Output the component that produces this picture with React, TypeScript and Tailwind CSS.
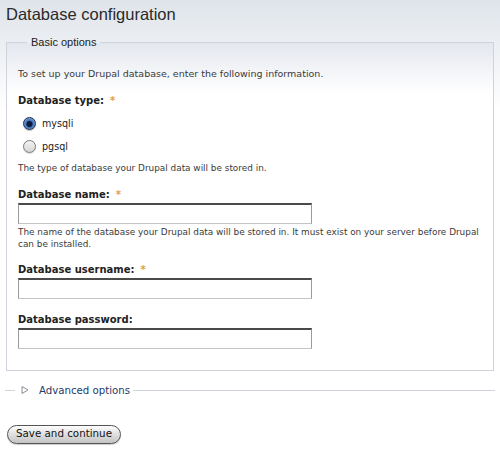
import { FC } from 'react';

const body = { fontFamily: '"DejaVu Sans", Verdana, sans-serif' };

const Required: FC = () => <span className="ml-[6px] text-[#d9a248]">*</span>;

const Label: FC<{ text: string; required?: boolean; className?: string }> = ({ text, required, className }) => (
  <div className={`text-[10px] font-bold leading-[13px] text-[#222] ${className ?? ''}`}>
    {text}
    {required && <Required />}
  </div>
);

const TextInput: FC<{ className?: string }> = ({ className }) => (
  <div
    className={`h-[21px] w-[294px] border border-[#9a9a9a] border-t-[2px] border-t-[#4a4a4a] border-b-[#c4c4c4] bg-white ${className ?? ''}`}
  />
);

const Radio: FC<{ label: string; checked?: boolean }> = ({ label, checked }) => (
  <div className="flex h-[23px] items-center pl-[5px]">
    {checked ? (
      <span className="h-[13px] w-[13px] rounded-full border border-[#1d2c4a] bg-[radial-gradient(circle_at_50%_55%,#0b1c3c_0px,#0b1c3c_2.5px,#3f6fb5_3.5px,#8fb3e4_7px)] shadow-[0_1px_1px_rgba(0,0,0,0.25)]" />
    ) : (
      <span className="h-[13px] w-[13px] rounded-full border border-[#7a7a7a] bg-[linear-gradient(to_bottom,#f2f2f2,#d6d6d6)] shadow-[0_1px_1px_rgba(0,0,0,0.15)]" />
    )}
    <span className="ml-[6px] text-[9.6px] leading-[13px] text-[#222]">{label}</span>
  </div>
);

const App: FC = () => {
  return (
    <div
      className="min-h-[449px] w-[500px] bg-[linear-gradient(to_bottom,#dfe4ea_0px,#ffffff_110px)] text-[9.5px] text-[#3a3a3a]"
      style={body}
    >
      <h1
        className="pl-[6px] pt-[4px] text-[16.5px] leading-[20px] text-[#2a2a2a]"
        style={{ fontFamily: '"Liberation Sans", Arial, sans-serif' }}
      >
        Database configuration
      </h1>

      <fieldset className="ml-[6px] mt-[12px] w-[488px] border border-[#cfd4dc] bg-[linear-gradient(to_bottom,#e4e7ef_0px,#ffffff_50px)] pb-[21px] pl-[11px] pt-[18px]">
        <legend
          className="ml-[9px] px-[4px] text-[11px] leading-[13px] text-[#222]"
          style={{ fontFamily: '"Liberation Sans", Arial, sans-serif' }}
        >
          Basic options
        </legend>

        <div className="leading-[13px]">To set up your Drupal database, enter the following information.</div>

        <Label text="Database type:" required className="mt-[14px]" />
        <div className="mt-[5px]">
          <Radio label="mysqli" checked />
          <Radio label="pgsql" />
        </div>
        <div className="mt-[4px] text-[8.9px] leading-[13px]">The type of database your Drupal data will be stored in.</div>

        <Label text="Database name:" required className="mt-[13px]" />
        <TextInput className="mt-[2px]" />
        <div className="mt-[1.5px] w-[470px] text-[8.9px] leading-[12px]">
          The name of the database your Drupal data will be stored in. It must exist on your server before Drupal can be
          installed.
        </div>

        <Label text="Database username:" required className="mt-[13px]" />
        <TextInput className="mt-[2px]" />

        <Label text="Database password:" className="mt-[14px]" />
        <TextInput className="mt-[2px]" />
      </fieldset>

      <div className="ml-[5px] mt-[13px] flex w-[490px] items-center">
        <div className="h-px w-[10px] bg-[#cfd4dc]" />
        <svg width="14" height="10" viewBox="0 0 14 10" className="ml-[4px]">
          <path d="M3 1.5 L9 5 L3 8.5 Z" fill="none" stroke="#8a8f96" strokeWidth="1" />
        </svg>
        <span className="ml-[6px] text-[10.2px] leading-[13px] text-[#1c3a6b]">Advanced options</span>
        <div className="ml-[3px] h-px flex-1 bg-[#cfd4dc]" />
      </div>

      <div className="ml-[7px] mt-[28px]">
        <button className="flex h-[19px] w-[114px] items-center justify-center rounded-full border-[1.5px] border-[#555] bg-[linear-gradient(to_bottom,#fdfdfd,#d9d9d9_60%,#c4c4c4)] text-[10.3px] text-[#111] shadow-[0_1px_1px_rgba(0,0,0,0.2)]">
          Save and continue
        </button>
      </div>
    </div>
  );
};

export default App;
